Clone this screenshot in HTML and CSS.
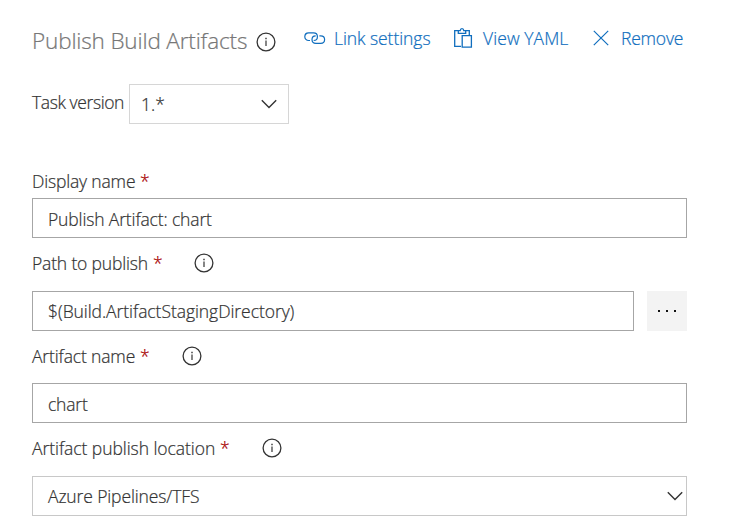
FILE: index.html
```html
<!DOCTYPE html>
<html lang="en">
<head>
<meta charset="utf-8">
<title>Publish Build Artifacts</title>
<link rel="stylesheet" href="styles.css">
</head>
<body>
<svg class="defs" aria-hidden="true">
  <symbol id="info" viewBox="0 0 20 20">
    <circle cx="10" cy="10" r="8.9" fill="none" stroke="currentColor" stroke-width="1.3"/>
    <path d="M10 8.6V14" fill="none" stroke="currentColor" stroke-width="1.2"/>
    <path d="M9.3 5.8h1.4v1.4H9.3z" fill="currentColor"/>
  </symbol>
  <symbol id="chevron" viewBox="0 0 16 10">
    <path d="M.8 1.2 8 8.4l7.200-7.200" fill="none" stroke="currentColor" stroke-width="1.4"/>
  </symbol>
</svg>
<main class="panel">
  <header class="header">
    <h1 class="title">Publish Build Artifacts</h1>
    <svg class="info info-title"><use href="#info"/></svg>
    <nav class="actions">
      <a class="action">
        <svg class="icon-link" viewBox="0 0 22 16" fill="none" stroke="currentColor" stroke-width="1.2"><path d="M6 10.500H4.700C2.400 10.500.8 8.900.8 6.700S2.400 2.900 4.700 2.900h4.800c2.300 0 3.900 1.600 3.900 3.800s-1.600 3.800-3.700 3.800"/><path d="M15.400 5.800h1.300c2.300 0 3.900 1.600 3.900 3.800s-1.600 3.800-3.900 3.800h-4.800c-2.300 0-3.900-1.600-3.900-3.800S9.600 5.800 11.700 5.800"/></svg>
        <span class="text-link">Link settings</span>
      </a>
      <a class="action">
        <svg class="icon-paste" viewBox="0 0 20 22" fill="none" stroke="currentColor" stroke-width="1.3"><path d="M8 19.300H1.700V3.700h3.600M12.700 3.700h3.600v4.500"/><path d="M5.300 6.300V3.700h1.900C7.300 2.300 8 1.600 9 1.600s1.700.7 1.800 2.100h1.900v2.600z"/><path d="M9.200 8.700h9.200v11.500H9.200z"/></svg>
        <span class="text-yaml">View YAML</span>
      </a>
      <a class="action">
        <svg class="icon-remove" viewBox="0 0 16 16" fill="none" stroke="currentColor" stroke-width="1.2"><path d="m.8.8 14.400 14.400M15.200.8.800 15.200"/></svg>
        <span class="text-remove">Remove</span>
      </a>
    </nav>
  </header>

  <div class="version">
    <span class="text-version">Task version</span>
    <div class="box version-select"><span>1.*</span><svg class="chevron"><use href="#chevron"/></svg></div>
  </div>

  <div class="label label-first"><span class="text-display">Display name</span><span class="required">*</span></div>
  <div class="box"><span class="value-display">Publish Artifact: chart</span></div>

  <div class="label"><span class="text-path">Path to publish</span><span class="required">*</span><svg class="info"><use href="#info"/></svg></div>
  <div class="path-row">
    <div class="box"><span class="value-path">$(Build.ArtifactStagingDirectory)</span></div>
    <div class="browse"><i></i><i></i><i></i></div>
  </div>

  <div class="label label-name"><span class="text-name">Artifact name</span><span class="required">*</span><svg class="info"><use href="#info"/></svg></div>
  <div class="box"><span class="value-name">chart</span></div>

  <div class="label"><span class="text-location">Artifact publish location</span><span class="required">*</span><svg class="info"><use href="#info"/></svg></div>
  <div class="box location-select"><span class="value-location">Azure Pipelines/TFS</span><svg class="chevron"><use href="#chevron"/></svg></div>
</main>
</body>
</html>
```
FILE: styles.css
```css
* { box-sizing: border-box; }
body {
  margin: 0;
  background: #fff;
  color: #333;
  font: 300 17.5px/24px "Open Sans", "Noto Sans", sans-serif;
  -webkit-text-stroke: .22px currentColor;
}
svg { display: block; flex: none; overflow: visible; }
span, h1 { white-space: nowrap; flex: none; }
.defs { position: absolute; width: 0; height: 0; }
.panel { width: 687px; padding: 24px 0 0 32px; }
.header { display: flex; height: 36px; align-items: center; }
.title { margin: -2px 0 0; width: 215px; font-size: 22.5px; font-weight: 300; line-height: 32px; color: #777; letter-spacing: -.15px; }
.info { width: 20px; height: 20px; color: #333; margin-left: 33px; }
.info-title { margin-left: 9px; }
.actions { display: flex; margin: -8px 0 0 28px; color: #106ebe; }
.action { display: flex; align-items: center; }
.icon-link { width: 22px; height: 16px; margin-right: 8px; }
.icon-paste { width: 20px; height: 22px; margin-right: 10px; }
.icon-remove { width: 16px; height: 16px; margin-right: 12px; }
.text-link { width: 119px; letter-spacing: -.06px; }
.text-yaml { width: 110px; letter-spacing: .08px; }
.text-remove { letter-spacing: -.2px; }
.version { display: flex; align-items: center; margin-top: 24px; height: 40px; }
.text-version { width: 97px; margin-top: -4px; letter-spacing: -.4px; }
.box {
  display: flex;
  align-items: center;
  justify-content: space-between;
  height: 40px;
  border: 1px solid #a6a6a6;
  padding: 1px 4px 0 15px;
}
.version-select { width: 160px; border-color: #d6d6d6; padding: 0 11px; }
.location-select { border-color: #c8c8c8; padding: 0 3px 0 15px; }
.chevron { width: 16px; height: 10px; }
.label { display: flex; align-items: center; height: 53px; padding-bottom: 3px; }
.label-first { height: 32px; margin-top: 42px; padding-bottom: 2px; }
.label-name { height: 52px; padding-bottom: 2px; }
.required { color: #a80000; width: 8px; margin-left: 4px; }
.text-display { width: 104px; letter-spacing: -.17px; }
.text-path { width: 117px; letter-spacing: -.17px; }
.text-name { width: 104px; letter-spacing: -.15px; }
.label-name .info { margin-left: 34px; }
.text-location { width: 184px; letter-spacing: -.06px; }
.text-location ~ .info { margin-left: 34px; }
.value-display { letter-spacing: -.14px; }
.value-path { letter-spacing: -.06px; }
.value-name { letter-spacing: -.2px; }
.value-location { letter-spacing: -.12px; }
.path-row { display: grid; grid-template-columns: 602px 40px; gap: 13px; }
.path-row .box { padding-top: 0; padding-bottom: 1px; }
.browse { display: flex; align-items: center; justify-content: center; gap: 6px; background: #f3f3f3; }
.browse i { width: 2px; height: 2px; background: #111; }
```
